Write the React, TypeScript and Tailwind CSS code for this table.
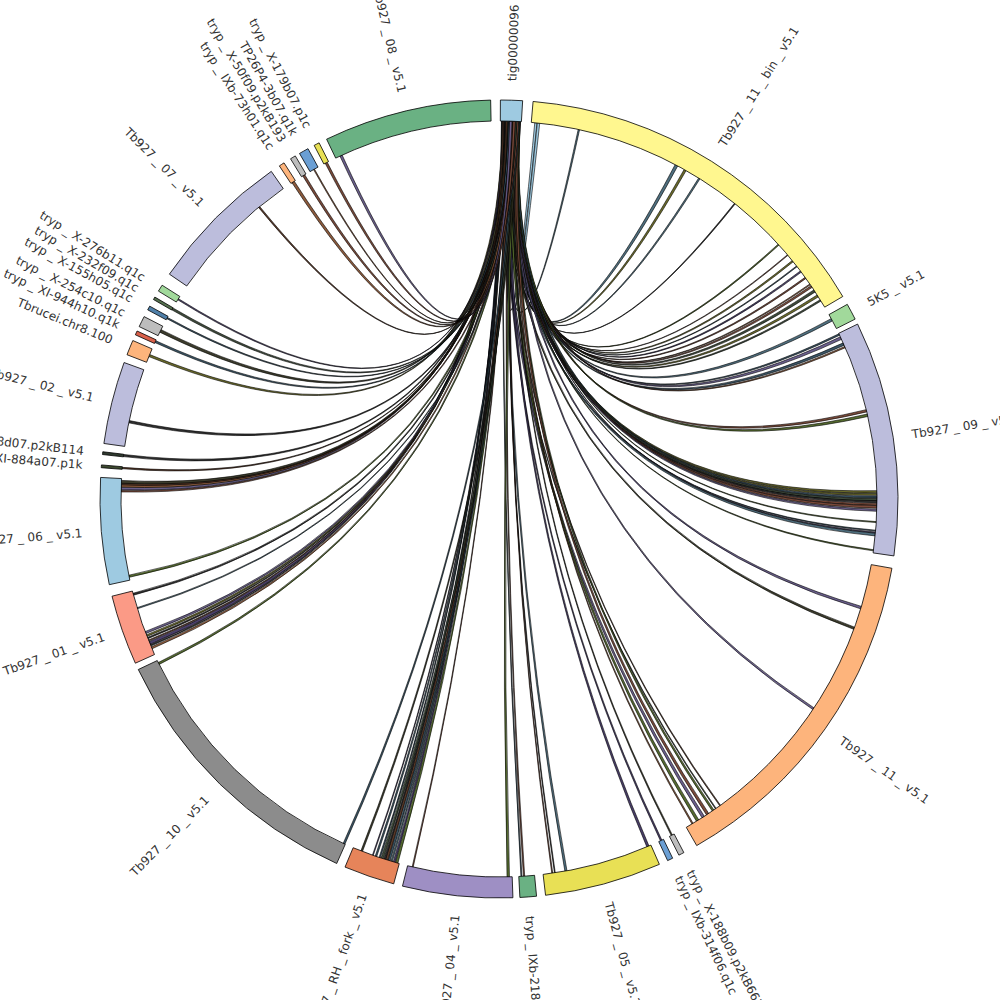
import React from "react";

const CX = 499;
const CY = 499;
const R_IN = 378;
const R_OUT = 399;
const R_LABEL = 418;

type Segment = { name: string; a0: number; a1: number; color: string };

const segments: Segment[] = [
  { name: "tig00000096", a0: 0.2, a1: 3.4, color: "#9ecae1" },
  { name: "Tb927 _ 11 _ bin _ v5.1", a0: 4.9, a1: 59.5, color: "#fff78f" },
  { name: "5K5 _ v5.1", a0: 60.8, a1: 63.2, color: "#a1d99b" },
  { name: "Tb927 _ 09 _ v5.1", a0: 64.0, a1: 98.2, color: "#bcbddc" },
  { name: "Tb927 _ 11 _ v5.1", a0: 100.0, a1: 150.3, color: "#fdb47c" },
  { name: "tryp _ X-188b09.p2kB663", a0: 152.4, a1: 153.2, color: "#bdbdbd" },
  { name: "tryp _ IXb-314f06.q1c", a0: 154.2, a1: 155.0, color: "#6b9fd4" },
  { name: "Tb927 _ 05 _ v5.1", a0: 156.3, a1: 173.3, color: "#e8e055" },
  { name: "tryp _ IXb-218g04.q1c", a0: 174.6, a1: 177.0, color: "#6ab183" },
  { name: "Tb927 _ 04 _ v5.1", a0: 178.0, a1: 194.0, color: "#9e8fc4" },
  { name: "Tb927 _ RH _ fork _ v5.1", a0: 195.3, a1: 202.7, color: "#e6845a" },
  { name: "Tb927 _ 10 _ v5.1", a0: 204.0, a1: 244.7, color: "#8c8c8c" },
  { name: "Tb927 _ 01 _ v5.1", a0: 245.7, a1: 255.9, color: "#fb9a86" },
  { name: "Tb927 _ 06 _ v5.1", a0: 257.6, a1: 273.1, color: "#9ecae1" },
  { name: "tryp _ XI-884a07.p1k", a0: 274.5, a1: 274.9, color: "#3d4a2f" },
  { name: "tryp _ X-128d07.p2kB114", a0: 276.4, a1: 276.8, color: "#2f3a2f" },
  { name: "Tb927 _ 02 _ v5.1", a0: 278.0, a1: 290.0, color: "#bcbddc" },
  { name: "Tbrucei.chr8.100", a0: 291.2, a1: 293.4, color: "#fdb47c" },
  { name: "tryp _ XI-944h10.q1k", a0: 294.3, a1: 294.9, color: "#d9604a" },
  { name: "tryp _ X-254c10.q1c", a0: 295.6, a1: 297.2, color: "#bdbdbd" },
  { name: "tryp _ X-155h05.q1c", a0: 298.3, a1: 298.9, color: "#4f7fa8" },
  { name: "tryp _ X-232f09.q1c", a0: 300.0, a1: 300.4, color: "#55704f" },
  { name: "tryp _ X-276b11.q1c", a0: 301.4, a1: 302.4, color: "#a1d99b" },
  { name: "Tb927 _ 07 _ v5.1", a0: 304.3, a1: 325.2, color: "#bcbddc" },
  { name: "tryp _ IXb-73h01.q1c", a0: 326.6, a1: 327.4, color: "#fdb47c" },
  { name: "tryp _ X-50f09.p2kB193", a0: 328.5, a1: 329.3, color: "#bdbdbd" },
  { name: "TP26P4-3b07.q1k", a0: 330.0, a1: 331.4, color: "#6b9fd4" },
  { name: "tryp _ X-179b07.p1c", a0: 332.4, a1: 333.2, color: "#e8e055" },
  { name: "Tb927 _ 08 _ v5.1", a0: 334.4, a1: 358.8, color: "#6ab183" },
];

// where each link lands (degrees clockwise from top); all of them start on tig00000096
const targets = [
  5.6, 6.0, 12.2, 28.0, 29.5, 32.0, 38.6, 47.7, 49.8, 51.0, 52.0, 53.0, 54.2, 55.4, 55.8, 56.6,
  57.5, 58.3, 61.7, 64.2, 64.8, 65.8, 66.3, 76.5, 77.2, 88.9, 89.3, 89.7, 90.1, 90.4, 90.8,
  91.2, 91.7, 93.5, 94.8, 95.1, 95.4, 97.8, 106.7, 110.0, 123.7, 144.2, 145.0, 145.5, 146.5,
  147.3, 148.3, 149.2, 152.8, 154.6, 156.8, 169.8, 171.5, 171.9, 176.2, 176.6, 178.6, 193.2,
  195.7, 196.1, 196.5, 196.9, 197.3, 197.6, 198.0, 198.4, 199.0, 199.5, 201.3, 204.2, 244.2,
  246.8, 247.2, 247.6, 248.0, 248.4, 248.8, 249.3, 253.2, 255.4, 258.2, 271.2, 271.6, 272.0,
  272.3, 272.6, 274.7, 276.6, 281.8, 292.3, 294.6, 296.4, 298.6, 300.2, 301.9, 320.6, 327.0,
  328.9, 330.7, 332.8, 335.3,
];

const linkFills = [
  "#5b3a29", "#3d4a3a", "#6b6b2a", "#4a3f6b", "#3a5566", "#7a4a3a", "#2f2f2f",
  "#556b2f", "#6a5f8c", "#8c5a3c", "#4f6f7f", "#3c3c2c",
];

function mulberry(seed: number) {
  let a = seed;
  return () => {
    a |= 0;
    a = (a + 0x6d2b79f5) | 0;
    let t = Math.imul(a ^ (a >>> 15), 1 | a);
    t = (t + Math.imul(t ^ (t >>> 7), 61 | t)) ^ t;
    return ((t ^ (t >>> 14)) >>> 0) / 4294967296;
  };
}

function pt(a: number, r: number) {
  const t = (a * Math.PI) / 180;
  return [CX + r * Math.sin(t), CY - r * Math.cos(t)];
}

function sectorPath(a0: number, a1: number) {
  const [x0, y0] = pt(a0, R_OUT);
  const [x1, y1] = pt(a1, R_OUT);
  const [x2, y2] = pt(a1, R_IN);
  const [x3, y3] = pt(a0, R_IN);
  return `M${x0} ${y0}A${R_OUT} ${R_OUT} 0 0 1 ${x1} ${y1}L${x2} ${y2}A${R_IN} ${R_IN} 0 0 0 ${x3} ${y3}Z`;
}

function ribbonPath(s0: number, s1: number, t0: number, t1: number) {
  const [ax, ay] = pt(s0, R_IN);
  const [bx, by] = pt(s1, R_IN);
  const [cx, cy] = pt(t0, R_IN);
  const [dx, dy] = pt(t1, R_IN);
  return (
    `M${ax} ${ay}A${R_IN} ${R_IN} 0 0 1 ${bx} ${by}` +
    `Q${CX} ${CY} ${cx} ${cy}A${R_IN} ${R_IN} 0 0 1 ${dx} ${dy}` +
    `Q${CX} ${CY} ${ax} ${ay}Z`
  );
}

const rand = mulberry(927);
const links = targets.map((t, i) => {
  const w = 0.12 + rand() * 0.32;
  const s = 0.35 + rand() * (2.9 - w);
  const fill = i < 2 ? "#9ecae1" : linkFills[Math.floor(rand() * linkFills.length)];
  return { d: ribbonPath(s, s + w, t - w / 2, t + w / 2), fill };
});

function Label({ seg }: { seg: Segment }) {
  const mid = (seg.a0 + seg.a1) / 2;
  const [x, y] = pt(mid, R_LABEL);
  const right = mid < 180;
  const rot = right ? mid - 90 : mid + 90;
  return (
    <text
      x={x}
      y={y}
      dy="0.35em"
      textAnchor={right ? "start" : "end"}
      transform={`rotate(${rot} ${x} ${y})`}
      fontSize={12}
      fill="#333333"
    >
      {seg.name}
    </text>
  );
}

export default function App() {
  return (
    <div className="w-[1000px] h-[1000px] bg-white overflow-hidden">
      <svg width={1000} height={1000} viewBox="0 0 1000 1000" fontFamily="'DejaVu Sans', sans-serif">
        {links.map((l, i) => (
          <path key={i} d={l.d} fill={l.fill} stroke="#000" strokeWidth={0.6} strokeLinejoin="round" />
        ))}
        {segments.map((s) => (
          <path key={s.name} d={sectorPath(s.a0, s.a1)} fill={s.color} stroke="#000" strokeWidth={0.8} />
        ))}
        {segments.map((s) => (
          <Label key={s.name} seg={s} />
        ))}
      </svg>
    </div>
  );
}
